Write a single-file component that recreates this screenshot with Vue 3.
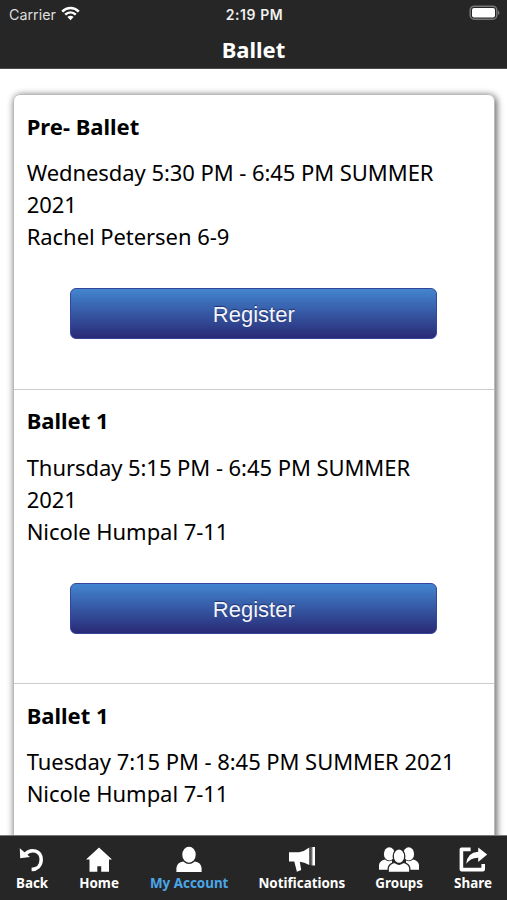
<script setup>
const classes = [
  { name: 'Pre- Ballet', time: 'Wednesday 5:30 PM - 6:45 PM SUMMER 2021', teacher: 'Rachel Petersen 6-9', open: true },
  { name: 'Ballet 1', time: 'Thursday 5:15 PM - 6:45 PM SUMMER 2021', teacher: 'Nicole Humpal 7-11', open: true },
  { name: 'Ballet 1', time: 'Tuesday 7:15 PM - 8:45 PM SUMMER 2021', teacher: 'Nicole Humpal 7-11', open: false },
]
</script>

<template>
  <div class="screen">
    <header class="top">
      <div class="status">
        <div class="carrier">
          <span>Carrier</span>
          <svg class="wifi" width="19" height="15" viewBox="0 0 19 15">
            <g fill="none" stroke="#fff" stroke-width="2.5">
              <path d="M1.2 5.6C6 .8 13 .8 17.8 5.6" />
              <path d="M4.2 8.7C7.3 5.8 11.7 5.8 14.8 8.7" />
            </g>
            <path d="M6.4 10.9Q9.5 8.4 12.6 10.9L9.5 14.2Z" fill="#fff" />
          </svg>
        </div>
        <span class="clock">2:19 PM</span>
        <svg class="battery" width="31" height="16" viewBox="0 0 31 16">
          <rect x="1.2" y="1.2" width="26.6" height="13" rx="4" fill="none" stroke="#777" stroke-width="1.5" />
          <rect x="3" y="3" width="23" height="9.6" rx="2" fill="#fff" />
          <path d="M29 5.3Q32 7.7 29 10.1Z" fill="#777" />
        </svg>
      </div>
      <h1>Ballet</h1>
    </header>

    <main class="content">
      <div class="card">
        <section v-for="(c, i) in classes" :key="i" class="item">
          <h2>{{ c.name }}</h2>
          <p>{{ c.time }}</p>
          <p>{{ c.teacher }}</p>
          <button v-if="c.open" class="register">Register</button>
        </section>
      </div>
    </main>

    <nav class="tabs">
      <a class="tab back">
        <svg width="28" height="28" viewBox="0 0 28 28">
          <path d="M7.2 8.2C13.5 1.6 23.2 5 23.2 13.6C23.2 20 18.8 23.4 13.6 23.6" fill="none" stroke="#fff" stroke-width="3.5" />
          <path d="M1.8 2.2L2.2 12.2L12 11.1Z" fill="#fff" />
        </svg>
        <span>Back</span>
      </a>
      <a class="tab home">
        <svg width="28" height="28" viewBox="0 0 28 28">
          <path d="M14 1.5L27 13.5H24V25.7H16.2V20.3H12.3V25.7H4.5V13.5H1Z" fill="#fff" />
        </svg>
        <span>Home</span>
      </a>
      <a class="tab account">
        <svg width="28" height="28" viewBox="0 0 28 28">
          <ellipse cx="14" cy="8.7" rx="6.7" ry="8" fill="#fff" />
          <path d="M1.4 25.9V22Q2 16.5 8.3 15.6Q14 20.6 19.7 15.6Q26 16.5 26.6 22V25.9Z" fill="#fff" />
        </svg>
        <span>My Account</span>
      </a>
      <a class="tab notifications">
        <svg width="28" height="28" viewBox="0 0 28 28">
          <path d="M1 6.2H11Q16.5 5.4 21.3 1.5V19Q16 16 11.8 15.8L13.2 24L8.9 25.7L6.3 15.5H1Z" fill="#fff" />
          <path d="M22.6 1.3L23.7 1V19.4L22.6 19.1Z" fill="#888" />
          <path d="M24.3 1H27V19.5H24.3Z" fill="#fff" />
        </svg>
        <span>Notifications</span>
      </a>
      <a class="tab groups">
        <svg width="42" height="28" viewBox="0 0 42 28">
          <g fill="#fff">
            <ellipse cx="11.3" cy="7.9" rx="5.4" ry="6.6" />
            <ellipse cx="30.7" cy="7.9" rx="5.4" ry="6.6" />
            <path d="M1 23.8V19Q1.6 14.8 7 13.6Q10 16.5 14 14.5V23.8Z" />
            <path d="M41 23.8V19Q40.4 14.8 35 13.6Q32 16.5 28 14.5V23.8Z" />
          </g>
          <g fill="#fff" stroke="#262626" stroke-width="1.3">
            <path d="M10.2 26.4V22Q11 17.8 16.5 16.3Q21 20.2 25.5 16.3Q31 17.8 31.8 22V26.4Z" />
            <ellipse cx="21" cy="10.2" rx="5.8" ry="7.3" />
          </g>
        </svg>
        <span>Groups</span>
      </a>
      <a class="tab share">
        <svg width="30" height="28" viewBox="0 0 30 28">
          <path d="M12.6 3.4H3.4V23.6H25.2V18" fill="none" stroke="#fff" stroke-width="3.6" stroke-linejoin="round" />
          <path d="M8.2 17.8Q9.3 6.5 20.2 5.8V1.6L29.2 8.6L20.2 16V11.8Q12.8 11.6 8.2 17.8Z" fill="#fff" />
        </svg>
        <span>Share</span>
      </a>
    </nav>
  </div>
</template>

<style>
body {
  margin: 0;
  background: #fff;
}
</style>

<style scoped>
.screen {
  display: flex;
  flex-direction: column;
  width: 507px;
  height: 900px;
  overflow: hidden;
  background: #fff;
  color: #000;
  font-family: "Noto Sans", sans-serif;
}
.top {
  flex: none;
  height: 69px;
  box-sizing: border-box;
  background: #262626;
  border-bottom: 1px solid #4c4c4c;
  color: #fff;
}
.status {
  display: grid;
  grid-template-columns: 1fr auto 1fr;
  align-items: center;
  height: 28px;
  padding: 0 7px 0 9px;
  font-family: Inter, sans-serif;
  font-size: 14.3px;
}
.carrier {
  display: flex;
  align-items: center;
  gap: 5px;
  color: #ddd;
}
.wifi {
  margin-top: -2px;
}
.clock {
  font-weight: 600;
  font-size: 14px;
  letter-spacing: 0.6px;
  color: #f0f0f0;
}
.battery {
  justify-self: end;
  margin-top: -2px;
}
h1 {
  margin: 0;
  font-size: 22px;
  line-height: 43px;
  text-align: center;
}
.content {
  flex: 1;
  min-height: 0;
  overflow: hidden;
  padding: 25px 12px 0 13px;
}
.card {
  border: 1px solid #bbb;
  border-radius: 7px;
  box-shadow: 2px 2px 7px 0 rgba(0, 0, 0, 0.5), 0 0 7px rgba(0, 0, 0, 0.22);
}
.item {
  box-sizing: border-box;
  height: 294.4px;
  padding: 15.6px 35px 0 12.7px;
  border-bottom: 1px solid #ccc;
}
.item:first-child {
  height: 294.8px;
}
h2 {
  margin: 0 0 15px;
  font-size: 22px;
  line-height: 31.7px;
}
p {
  margin: 0;
  font-size: 22px;
  line-height: 31.7px;
  letter-spacing: -0.06px;
}
.register {
  display: block;
  width: 367px;
  height: 51px;
  margin: 36px 0 0 43.6px;
  padding: 2px 0 0;
  border: 1px solid #35459b;
  border-radius: 6px;
  background: linear-gradient(#4385d0, #292a76);
  color: #f4f5fc;
  font: 22px "Liberation Sans", sans-serif;
  text-shadow: 0 -1px 1px rgba(0, 0, 40, 0.5);
}
.tabs {
  flex: none;
  display: flex;
  justify-content: space-between;
  box-sizing: border-box;
  height: 65px;
  padding: 10px 15px 0 16px;
  border-top: 1px solid #777;
  background: #262626;
  color: #fff;
}
.tab {
  display: flex;
  flex-direction: column;
  align-items: center;
  font-size: 13.4px;
  font-weight: 700;
  line-height: 19px;
  white-space: nowrap;
}
.notifications,
.groups {
  margin-left: -1px;
}
.tab svg {
  display: block;
}
.account span {
  color: #4ba6e8;
}
</style>
